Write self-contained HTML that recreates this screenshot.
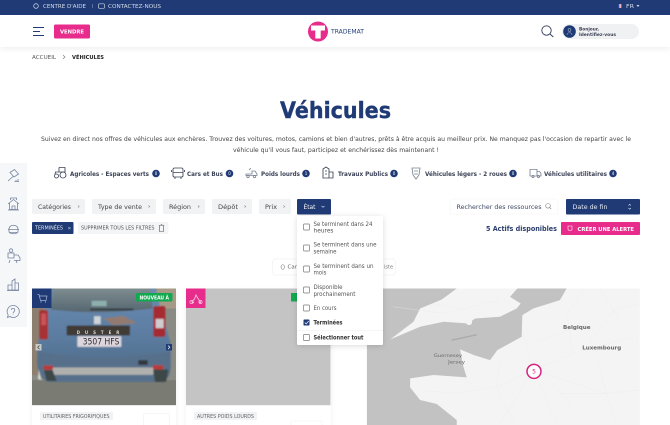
<!DOCTYPE html>
<html lang="fr">
<head>
<meta charset="utf-8">
<title>Véhicules - Trademat</title>
<style>
html,body{margin:0;padding:0;background:#fff;width:670px;height:425px;overflow:hidden}
svg.root{display:block;position:absolute;left:0;top:0;filter:blur(.35px)}
text{font-family:"DejaVu Sans","Liberation Sans",sans-serif;fill:#3b4256}
.b{font-weight:700}
.n{fill:#1f3a75}
.w{fill:#fff}
.ic{fill:none;stroke:#3a4356;stroke-width:.85}
.sb{fill:none;stroke:#74849f;stroke-width:.8}
</style>
</head>
<body>
<svg class="root" width="670" height="425" viewBox="0 0 670 425" xmlns="http://www.w3.org/2000/svg">
<defs>
<filter id="sh" x="-20%" y="-20%" width="140%" height="140%"><feDropShadow dx="0" dy="1" stdDeviation="3" flood-color="#000" flood-opacity=".14"/></filter>
<filter id="hs" x="-5%" y="-20%" width="110%" height="160%"><feDropShadow dx="0" dy="2" stdDeviation="3" flood-color="#000" flood-opacity=".06"/></filter>
<filter id="bl"><feGaussianBlur stdDeviation="2"/></filter>
<linearGradient id="body" x1="0" y1="0" x2="0" y2="1"><stop offset="0" stop-color="#6a8cb3"/><stop offset=".55" stop-color="#5a7a9e"/><stop offset="1" stop-color="#4c6680"/></linearGradient>
<linearGradient id="glass" x1="0" y1="0" x2="0" y2="1"><stop offset="0" stop-color="#7d8c90"/><stop offset="1" stop-color="#566670"/></linearGradient>
</defs>

<!-- header -->
<rect x="0" y="15" width="670" height="32" fill="#fff" filter="url(#hs)"/>
<rect x="0" y="0" width="670" height="15" fill="#1f3a75"/>
<circle cx="36" cy="6" r="2.300" fill="none" stroke="#c5cee0" stroke-width=".8"/>
<text x="43" y="8" font-size="5.500" textLength="43" lengthAdjust="spacingAndGlyphs" style="fill:#d5dcea">CENTRE D'AIDE</text>
<rect x="92" y="4" width=".6" height="4" fill="#7e90b5"/>
<rect x="98.500" y="3.800" width="6" height="4.500" rx="1" fill="none" stroke="#c5cee0" stroke-width=".7"/>
<text x="108" y="8" font-size="5.500" textLength="53" lengthAdjust="spacingAndGlyphs" style="fill:#d5dcea">CONTACTEZ-NOUS</text>
<circle cx="620" cy="6" r="2" fill="#eee"/><rect x="618" y="4" width="1.400" height="4" fill="#2d4aa0"/><rect x="620.700" y="4" width="1.300" height="4" fill="#e03a3e"/>
<text x="626" y="8" font-size="5.500" textLength="8" lengthAdjust="spacingAndGlyphs" style="fill:#d5dcea">FR</text>
<path d="M636.500 5l3 0-1.500 2z" fill="#d5dcea"/>

<path d="M33 27.500h11M33 31.500h7M33 35.500h11" stroke="#1f3a75" stroke-width="1.100" fill="none"/>
<rect x="54" y="24.500" width="36" height="14" rx="1.500" fill="#e72c8c"/>
<text x="60" y="33.500" font-size="5.500" class="b w" textLength="24" lengthAdjust="spacingAndGlyphs">VENDRE</text>

<circle cx="318" cy="31.500" r="10" fill="#e72c8c"/>
<path d="M311 25.500h14v5h-4.300v8h-5.400v-8h-4.300z" fill="#fff"/>
<text x="331" y="33.500" font-size="6" textLength="33" lengthAdjust="spacingAndGlyphs" class="n">TRADEMAT</text>

<circle cx="546.500" cy="30.500" r="4.700" fill="none" stroke="#2e3a55" stroke-width=".9"/>
<path d="M550 34l3.300 3" stroke="#2e3a55" stroke-width=".9"/>
<rect x="562" y="24" width="77" height="15" rx="7.500" fill="#f0f1f3"/>
<circle cx="569.500" cy="31.500" r="6.300" fill="#1f3a75"/>
<circle cx="569.500" cy="30" r="1.400" fill="none" stroke="#9fb0d0" stroke-width=".6"/>
<path d="M567 35c0-3 5-3 5 0" fill="none" stroke="#9fb0d0" stroke-width=".6"/>
<text x="579" y="30.500" font-size="4.500" textLength="20" lengthAdjust="spacingAndGlyphs" class="b">Bonjour,</text>
<text x="579" y="36" font-size="4.500" textLength="37" lengthAdjust="spacingAndGlyphs" class="b">Identifiez-vous</text>

<!-- breadcrumb -->
<text x="32" y="59" font-size="5.500" textLength="24" lengthAdjust="spacingAndGlyphs" style="fill:#555">ACCUEIL</text>
<path d="M63 55l2 2-2 2" fill="none" stroke="#777" stroke-width=".6"/>
<text x="72" y="59" font-size="5.500" class="b" textLength="32" lengthAdjust="spacingAndGlyphs" style="fill:#222">VÉHICULES</text>

<!-- title -->
<text x="280" y="118" font-size="22" class="b n" textLength="111" lengthAdjust="spacingAndGlyphs" stroke="#1f3a75" stroke-width=".4">Véhicules</text>
<text x="41" y="141" font-size="6.500" textLength="590" lengthAdjust="spacingAndGlyphs" style="fill:#444">Suivez en direct nos offres de véhicules aux enchères. Trouvez des voitures, motos, camions et bien d'autres, prêts à être acquis au meilleur prix. Ne manquez pas l'occasion de repartir avec le</text>
<text x="233" y="152" font-size="6.500" textLength="206" lengthAdjust="spacingAndGlyphs" style="fill:#444">véhicule qu'il vous faut, participez et enchérissez dès maintenant !</text>

<!-- category row -->
<g class="ic">
<circle cx="63" cy="175" r="3"/><circle cx="56.500" cy="176" r="2"/><path d="M59 167.500h6v4.500M59 167.500v4.500h-3.500l-.5 2M58 172h7.500"/>
<rect x="173" y="168" width="10" height="9" rx="1.500"/><path d="M173 172.500h10M175 177v2M181 177v2M171.500 170v2M184.500 170v2"/>
<path d="M246 174h6v-3h3l2 3v1.500h-11zM249 170l2-2" stroke="#7b8494"/><circle cx="248" cy="176.500" r="1.200" stroke="#7b8494"/><circle cx="254.500" cy="176.500" r="1.200" stroke="#7b8494"/>
<path d="M323 178v-9l3-2 3 2v9zM329 178v-6h4v6zM325 171h2M325 174h2"/>
<path d="M412 168h8l-1 7-3 4-3-4zM414 171h4M414 174h4" stroke="#7b8494"/>
<path d="M530 169.500h7v6.500h-7zM537 171.500h2.500l1.500 2v2.500h-4" stroke="#7b8494"/><circle cx="533" cy="176.500" r="1.100" stroke="#7b8494"/><circle cx="538.500" cy="176.500" r="1.100" stroke="#7b8494"/>
</g>
<g font-size="6.500">
<text x="70" y="175.800" textLength="79" lengthAdjust="spacingAndGlyphs" class="b">Agricoles - Espaces verts</text>
<text x="187" y="175.800" textLength="36" lengthAdjust="spacingAndGlyphs" class="b">Cars et Bus</text>
<text x="261" y="175.800" textLength="39" lengthAdjust="spacingAndGlyphs" class="b">Poids lourds</text>
<text x="338" y="175.800" textLength="50" lengthAdjust="spacingAndGlyphs" class="b">Travaux Publics</text>
<text x="425" y="175.800" textLength="82" lengthAdjust="spacingAndGlyphs" class="b">Véhicules légers - 2 roues</text>
<text x="544" y="175.800" textLength="63" lengthAdjust="spacingAndGlyphs" class="b">Véhicules utilitaires</text>
</g>
<g fill="#1f3a75">
<circle cx="156" cy="173.500" r="3.800"/><circle cx="229.500" cy="173.500" r="3.800"/><circle cx="306" cy="173.500" r="3.800"/><circle cx="394" cy="173.500" r="3.800"/><circle cx="513" cy="173.500" r="3.800"/><circle cx="613" cy="173.500" r="3.800"/>
</g>
<g font-size="4" text-anchor="middle">
<text x="156" y="175" class="w">0</text><text x="229.500" y="175" class="w">0</text><text x="306" y="175" class="w">1</text><text x="394" y="175" class="w">0</text><text x="513" y="175" class="w">0</text><text x="613" y="175" class="w">4</text>
</g>

<!-- sidebar -->
<rect x="0" y="163" width="27" height="164" fill="#f6f7f9"/>
<g class="sb">
<path d="M8 181l5-4.500M10 172.500l4.500-3 4 4.500-4.500 3zM14.500 181.500h4.500M16 180v1.500M18 179v2.500"/>
<path d="M8 204l5.500-4.500 5.500 4.500M9.500 203v6.500h8V203M12 209.500v-3.500h3v3.500M8 210h11M10.500 200v-2h6v2"/>
<path d="M9 229c0-5 9-5 9 0v2.500c0 3-9 3-9 0zM8 229.500h11M9.500 232.500h8"/>
<path d="M8 253h6v5H8zM14 255h4l2 3v2.500h-6M9 263l1-3M17 263l-1-3"/><circle cx="11" cy="250.500" r="1.700"/>
<path d="M8 290v-5h4v5zM12 290v-9l3-2v11zM15 290v-7h3.500v7zM7 290.500h12"/>
<path d="M13 305.500a6 6 0 1 1-3 11l-2.500 1 .7-2.600A6 6 0 0 1 13 305.500z"/>
<path d="M11.300 310c.2-2.300 3.600-2 3.500 .2 0 1.500-1.700 1.400-1.700 3M13.100 314.500v.6"/>
</g>

<!-- filter buttons -->
<g fill="#f1f2f4">
<rect x="32" y="199" width="53" height="15" rx="1.500"/>
<rect x="92" y="199" width="64" height="15" rx="1.500"/>
<rect x="163" y="199" width="42" height="15" rx="1.500"/>
<rect x="212" y="199" width="40" height="15" rx="1.500"/>
<rect x="259" y="199" width="32" height="15" rx="1.500"/>
</g>
<g font-size="6.500">
<text x="38" y="209" textLength="33" lengthAdjust="spacingAndGlyphs" style="fill:#444">Catégories</text>
<text x="98" y="209" textLength="44" lengthAdjust="spacingAndGlyphs" style="fill:#444">Type de vente</text>
<text x="169" y="209" textLength="22" lengthAdjust="spacingAndGlyphs" style="fill:#444">Région</text>
<text x="218" y="209" textLength="20" lengthAdjust="spacingAndGlyphs" style="fill:#444">Dépôt</text>
<text x="265" y="209" textLength="12" lengthAdjust="spacingAndGlyphs" style="fill:#444">Prix</text>
</g>
<path d="M78 205.500l1.200 1-1.200 1M148.500 205.500l1.200 1-1.200 1M198 205.500l1.200 1-1.200 1M244.500 205.500l1.200 1-1.200 1M283.500 205.500l1.200 1-1.200 1" fill="none" stroke="#888" stroke-width=".6"/>
<rect x="297" y="199" width="34" height="15.500" rx="1" fill="#1f3a75"/>
<text x="303.500" y="209" font-size="6.500" textLength="12" lengthAdjust="spacingAndGlyphs" style="fill:#fff">État</text>
<path d="M321.500 206l1.500 1.300 1.500-1.300" fill="none" stroke="#c8d2e6" stroke-width=".7"/>

<rect x="450" y="199" width="108" height="15" rx="2" fill="#fff" stroke="#f2f3f5" stroke-width=".6"/>
<text x="456.500" y="209" font-size="6.200" textLength="85" lengthAdjust="spacingAndGlyphs" style="fill:#3e4a66">Rechercher des ressources</text>
<circle cx="548" cy="205.800" r="2.300" fill="none" stroke="#777" stroke-width=".6"/><path d="M549.700 207.500l1.500 1.500" stroke="#777" stroke-width=".6"/>
<rect x="566" y="199" width="74" height="15.500" rx="1" fill="#1f3a75"/>
<text x="572.500" y="209" font-size="6.500" textLength="35" lengthAdjust="spacingAndGlyphs" style="fill:#e8ecf4">Date de fin</text>
<path d="M628.500 205.500l1.200-1.200 1.200 1.200M628.500 208l1.200 1.200 1.200-1.200" fill="none" stroke="#dfe5f0" stroke-width=".6"/>

<!-- active filters -->
<rect x="32" y="222" width="41.500" height="12" rx="1" fill="#1f3a75"/>
<text x="35" y="229.700" font-size="4.800" textLength="28" lengthAdjust="spacingAndGlyphs" style="fill:#e0e6f2">TERMINÉES</text>
<text x="67.500" y="229.700" font-size="4.500" style="fill:#e0e6f2">×</text>
<rect x="78" y="222" width="90.500" height="12" rx="1" fill="#f4f5f6"/>
<text x="81" y="229.700" font-size="4.800" textLength="73.500" lengthAdjust="spacingAndGlyphs" style="fill:#555">SUPPRIMER TOUS LES FILTRES</text>
<path d="M159.500 225.500h4v6h-4zM158.800 225.500h5.400M160.800 224.700h1.400" fill="none" stroke="#555" stroke-width=".6"/>

<text x="486" y="231" font-size="6.800" class="b" textLength="71" lengthAdjust="spacingAndGlyphs" style="fill:#2c3e6b">5 Actifs disponibles</text>
<rect x="561" y="222" width="79" height="13" rx="1" fill="#e72c8c"/>
<path d="M568 226h4v3.500l-1 1h-2l-1-1z" fill="none" stroke="#fff" stroke-width=".6"/>
<text x="577.500" y="231" font-size="5.200" textLength="56.500" lengthAdjust="spacingAndGlyphs" class="b" style="fill:#fff">CRÉER UNE ALERTE</text>

<!-- map / list toggle -->
<rect x="272.500" y="259" width="123" height="16" rx="3" fill="#fff" stroke="#f0f1f3" stroke-width=".7"/>
<path d="M281 267c0-3 3.500-3 3.500 0 0 1.300-1.700 3-1.700 3s-1.800-1.700-1.800-3z" fill="none" stroke="#666" stroke-width=".5"/>
<text x="287.500" y="268.500" font-size="5" textLength="15" lengthAdjust="spacingAndGlyphs" style="fill:#666">Carte</text>
<text x="384" y="268.500" font-size="5" style="fill:#777">iste</text>

<!-- card 1 -->
<rect x="32" y="289" width="144" height="140" fill="#fff" filter="url(#hs)"/>
<svg x="32" y="288.500" width="144" height="116.700" viewBox="96 25 432 350" preserveAspectRatio="none">
  <rect x="96" y="25" width="432" height="350" fill="#8a8b84"/>
  <rect x="96" y="300" width="432" height="75" fill="#7a7c74"/>
  <rect x="96" y="25" width="70" height="260" fill="#8c7f70"/>
  <rect x="470" y="25" width="58" height="60" fill="#a69a86"/>
  <g filter="url(#bl)">
  <path d="M150 25H465L495 130L512 190V260Q510 300 480 305H150Q115 300 112 250V200L125 130z" fill="url(#body)"/>
  <path d="M160 25H450L458 85Q300 105 152 88z" fill="url(#glass)"/>
  <rect x="275" y="62" width="45" height="16" fill="#8eb0ad"/>
  <path d="M270 88H400" stroke="#2d3438" stroke-width="5"/>
  <rect x="118" y="90" width="26" height="88" rx="6" fill="#a63136"/>
  <rect x="124" y="100" width="14" height="35" fill="#c8555a"/>
  <rect x="460" y="78" width="36" height="92" rx="6" fill="#a62c33"/>
  <rect x="467" y="116" width="24" height="28" fill="#cfcdd0"/>
  <rect x="200" y="136" width="190" height="30" rx="3" fill="#3f3b34"/>
  <rect x="282" y="108" width="20" height="24" fill="#cfd4d8"/>
  <path d="M310 115l60-8 40 22-70 6z" fill="#a87858" opacity=".7"/>
  <rect x="232" y="168" width="132" height="32" rx="2" fill="#dcd6dc"/>
  <path d="M115 215Q300 250 512 215V262Q500 300 470 305H150Q120 298 115 262z" fill="#56708b"/>
  <rect x="130" y="256" width="30" height="13" fill="#b83a3a"/>
  <rect x="458" y="255" width="32" height="13" fill="#b83a3a"/>
  <rect x="158" y="262" width="302" height="22" rx="4" fill="#b0b1ae"/>
  <rect x="415" y="240" width="28" height="14" fill="#33393c"/>
  <path d="M132 270H158L170 302H140z" fill="#3d4646"/>
  <path d="M460 268H505L498 305H465z" fill="#3d4646"/>
  <path d="M116 268l8 32-10-4z" fill="#d9d9d4"/>
  </g>
  <text x="230" y="161" font-size="12" textLength="128" style="fill:#d8d8d0;font-weight:700">D U S T E R</text>
  <text x="248" y="193" font-size="26" textLength="110" lengthAdjust="spacingAndGlyphs" style="fill:#2b2b33">3507 HFS</text>
</svg>
<rect x="32" y="288.500" width="19.500" height="19.500" fill="#1f3a75"/>
<path d="M37.500 294.500h1.500l1.500 6h5.500l1-4.500h-7.500" fill="none" stroke="#a8b7d4" stroke-width=".7"/>
<circle cx="41" cy="302" r=".6" fill="#a8b7d4"/><circle cx="45.500" cy="302" r=".6" fill="#a8b7d4"/>
<rect x="136" y="293" width="36.500" height="8.500" rx="1" fill="#12a850"/>
<text x="139.500" y="299.300" font-size="4.900" textLength="29.500" lengthAdjust="spacingAndGlyphs" class="b" style="fill:#fff">NOUVEAU À</text>
<rect x="35.500" y="344" width="6" height="6.500" fill="#c8c8c4"/>
<path d="M39.500 345.500l-1.800 1.800 1.800 1.800" fill="none" stroke="#444" stroke-width=".7"/>
<rect x="166" y="344" width="6" height="6.500" fill="#1f3a75"/>
<path d="M168 345.500l1.800 1.800-1.800 1.800" fill="none" stroke="#fff" stroke-width=".7"/>
<rect x="40" y="412" width="73" height="8" rx="1" fill="#f1f2f3"/>
<text x="43" y="418" font-size="4.800" textLength="66.500" lengthAdjust="spacingAndGlyphs" style="fill:#666">UTILITAIRES FRIGORIFIQUES</text>
<rect x="143.500" y="413.500" width="26" height="14" rx="1" fill="#fff" stroke="#f0f0f0" stroke-width=".6"/>

<!-- card 2 -->
<rect x="186" y="289" width="145" height="140" fill="#fff" filter="url(#hs)"/>
<rect x="186" y="288.500" width="144.500" height="116.700" fill="#c4c4c4"/>
<rect x="186" y="288.500" width="19.500" height="19.500" fill="#e72c8c"/>
<path d="M191.500 302l3-3 1.500-4 2 3.500 2.500 3.500M192 302.500h2M199 302.500h2" fill="none" stroke="#f8c5de" stroke-width=".9"/>
<circle cx="191.500" cy="302" r="1.600" fill="none" stroke="#f8c5de" stroke-width=".7"/><circle cx="200.500" cy="302" r="1.600" fill="none" stroke="#f8c5de" stroke-width=".7"/>
<rect x="291" y="293" width="12" height="8.500" fill="#12a850"/>
<rect x="194" y="412" width="63" height="8" rx="1" fill="#f1f2f3"/>
<text x="197" y="418" font-size="4.800" textLength="57" lengthAdjust="spacingAndGlyphs" style="fill:#666">AUTRES POIDS LOURDS</text>
<rect x="291" y="421" width="31" height="10" rx="1" fill="#fff" stroke="#f0f0f0" stroke-width=".6"/>

<!-- map -->
<svg x="366.700" y="288.500" width="273.300" height="136.500" viewBox="-100 25 820 410">
  <rect x="-100" y="25" width="820" height="410" fill="#f4f4f4"/>
  <path d="M-100 25L170 25L125 58L60 85L40 125L-30 178L60 140L130 125L205 130L225 115L300 110L350 85L362 70L330 50L352 25L500 25L480 60L400 85L367 105L365 170L292 210L270 240L222 225L180 208L190 260L200 292L100 285L30 295L30 322L60 360L110 372L170 420L170 435L-100 435Z" fill="#c2c2c2"/>
  <path d="M155 180l75-16" stroke="#a9a9a9" stroke-width="4" fill="none"/>
  <g fill="none" stroke="#ebebeb" stroke-width="1">
    <path d="M400 270L370 160M400 270L290 320L170 340M400 270L520 220L700 170M400 270L470 430M400 270L300 430M400 270L620 340L720 330"/>
    <path d="M520 220L500 100L560 25M560 200L640 90M300 240L290 320L340 430M200 300L300 400M480 340L620 340L650 430"/>
    <path d="M400 190L560 130M60 330L170 340M-20 80L130 100L300 60M100 70L210 90M620 340L590 230M450 300L520 380M640 90L720 70M600 25L660 120"/>
  </g>
  <circle cx="207" cy="126" r="9" fill="#f4f4f4"/>
  <text x="489" y="147" font-size="16.500" textLength="83" lengthAdjust="spacingAndGlyphs" style="fill:#666;font-weight:700">Belgique</text>
  <text x="547" y="208" font-size="16.500" textLength="117" lengthAdjust="spacingAndGlyphs" style="fill:#666;font-weight:700">Luxembourg</text>
  <text x="101" y="231" font-size="12" textLength="85" lengthAdjust="spacingAndGlyphs" style="fill:#666">Guernesey</text>
  <text x="144" y="251" font-size="12" textLength="51" lengthAdjust="spacingAndGlyphs" style="fill:#666">Jersey</text>
  <circle cx="402" cy="274" r="21" fill="#fff" stroke="#d5237f" stroke-width="4.500"/>
  <text x="402" y="281" font-size="18" text-anchor="middle" style="fill:#d5237f">5</text>
</svg>

<!-- dropdown -->
<rect x="297" y="216" width="86" height="129" rx="1.500" fill="#fff" filter="url(#sh)"/>
<g fill="#fff" stroke="#777" stroke-width=".7">
<rect x="303.500" y="224" width="6" height="6" rx=".8"/>
<rect x="303.500" y="245" width="6" height="6" rx=".8"/>
<rect x="303.500" y="266" width="6" height="6" rx=".8"/>
<rect x="303.500" y="287" width="6" height="6" rx=".8"/>
<rect x="303.500" y="305" width="6" height="6" rx=".8"/>
<rect x="303.500" y="334.500" width="6" height="6" rx=".8"/>
</g>
<rect x="303.500" y="319.500" width="6" height="6" rx=".8" fill="#1f3a75"/>
<path d="M304.800 322.500l1.400 1.500 2.400-3" fill="none" stroke="#fff" stroke-width=".7"/>
<g font-size="5.800">
<text x="313.500" y="226" textLength="59" lengthAdjust="spacingAndGlyphs" style="fill:#555">Se terminent dans 24</text>
<text x="313.500" y="232.500" textLength="20" lengthAdjust="spacingAndGlyphs" style="fill:#555">heures</text>
<text x="313.500" y="246.700" textLength="63" lengthAdjust="spacingAndGlyphs" style="fill:#555">Se terminent dans une</text>
<text x="313.500" y="253.500" textLength="23" lengthAdjust="spacingAndGlyphs" style="fill:#555">semaine</text>
<text x="313.500" y="268" textLength="60" lengthAdjust="spacingAndGlyphs" style="fill:#555">Se terminent dans un</text>
<text x="313.500" y="274.500" textLength="13" lengthAdjust="spacingAndGlyphs" style="fill:#555">mois</text>
<text x="313.500" y="289" textLength="29" lengthAdjust="spacingAndGlyphs" style="fill:#555">Disponible</text>
<text x="313.500" y="296" textLength="42" lengthAdjust="spacingAndGlyphs" style="fill:#555">prochainement</text>
<text x="313.500" y="310" textLength="23" lengthAdjust="spacingAndGlyphs" style="fill:#555">En cours</text>
</g>
<text x="313.500" y="324.500" font-size="5.800" class="b" textLength="29" lengthAdjust="spacingAndGlyphs" style="fill:#333">Terminées</text>
<rect x="297" y="330" width="86" height=".6" fill="#f0f0f0"/>
<text x="313.500" y="339.500" font-size="5.800" class="b" textLength="50" lengthAdjust="spacingAndGlyphs" style="fill:#333">Sélectionner tout</text>
</svg>
</body>
</html>
